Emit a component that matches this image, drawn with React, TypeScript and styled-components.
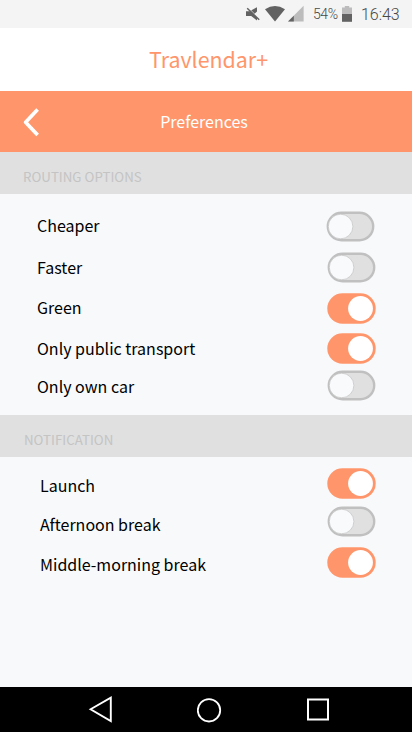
import React from "react";
import styled, { createGlobalStyle } from "styled-components";

const GlobalStyle = createGlobalStyle`
  * { box-sizing: border-box; }
  html, body { margin: 0; padding: 0; background: #f8f9fb; }
  button { border: 0; padding: 0; background: none; font: inherit; display: block; }
  svg { display: block; }
`;

const Screen = styled.div`
  width: 412px;
  height: 732px;
  display: flex;
  flex-direction: column;
  overflow: hidden;
  background: #f8f9fb;
  font-family: "Noto Sans CJK SC", "Noto Sans", sans-serif;
`;

const StatusBar = styled.div`
  height: 28px;
  flex: none;
  display: flex;
  align-items: flex-start;
  padding-left: 245px;
  background: #f4f4f4;
  color: #484848;
  font-family: Roboto, sans-serif;
  font-weight: 300;
  line-height: 29px;
  white-space: nowrap;
`;

const StatusIcons = styled.svg`
  width: 60px;
  height: 28px;
  flex: none;
`;

const Battery = styled.svg`
  width: 12px;
  height: 28px;
  flex: none;
`;

const Percent = styled.span`
  width: 36px;
  padding-left: 8px;
  font-size: 14px;
  letter-spacing: -0.45px;
`;

const Clock = styled.span`
  padding-left: 8px;
  font-size: 16px;
  letter-spacing: -0.05px;
`;

const Brand = styled.header`
  height: 63px;
  flex: none;
  padding-top: 14px;
  padding-left: 5px;
  text-align: center;
  background: #fff;
  color: #ff966b;
  font-size: 21.4px;
  line-height: 34px;
`;

const TitleBar = styled.div`
  height: 61px;
  flex: none;
  display: grid;
  grid-template-columns: 60px 1fr 60px;
  align-items: center;
  background: #ff966b;
  color: #fff;
`;

const BackButton = styled.button`
  width: 40px;
  padding-left: 22px;
`;

const Title = styled.h1`
  margin: 0 4px 2px 0;
  text-align: center;
  font-size: 16px;
  font-weight: 400;
  line-height: 24px;
`;

const SectionHeader = styled.h2<{ $inset: number }>`
  height: 42px;
  flex: none;
  margin: 0;
  padding: 15px 0 0 ${(p) => p.$inset}px;
  background: #e0e0e0;
  color: #c4c4c4;
  font-size: 13.3px;
  font-weight: 400;
  line-height: 20px;
`;

const OptionList = styled.ul<{ $height: number; $inset: number; $top: number }>`
  height: ${(p) => p.$height}px;
  flex: none;
  margin: 0;
  padding: ${(p) => p.$top}px 36px 0 ${(p) => p.$inset}px;
  list-style: none;
`;

const OptionRow = styled.li<{ $height: number }>`
  height: ${(p) => p.$height}px;
  display: flex;
  justify-content: space-between;
  align-items: flex-start;
`;

const Label = styled.span<{ $drop: number }>`
  padding-top: ${(p) => p.$drop}px;
  color: #000;
  font-size: 16px;
  line-height: 24px;
  white-space: nowrap;
`;

const Toggle = styled.button<{ $nudge?: number }>`
  width: 49px;
  height: 31px;
  margin-right: ${(p) => p.$nudge ?? 0}px;
`;

const NavBar = styled.nav`
  height: 45px;
  flex: none;
  display: flex;
  align-items: center;
  justify-content: space-between;
  padding: 0 82px 0 88px;
  background: #000;
`;

type Option = { label: string; on: boolean; height: number; drop: number; nudge?: number };

const routing: Option[] = [
  { label: "Cheaper", on: false, height: 41, drop: 2, nudge: 1 },
  { label: "Faster", on: false, height: 41, drop: 3 },
  { label: "Green", on: true, height: 40, drop: 2 },
  { label: "Only public transport", on: true, height: 37, drop: 3 },
  { label: "Only own car", on: false, height: 31, drop: 4 },
];

const notification: Option[] = [
  { label: "Launch", on: true, height: 38, drop: 5 },
  { label: "Afternoon break", on: false, height: 41, drop: 6 },
  { label: "Middle-morning break", on: true, height: 31, drop: 5 },
];

function Switch({ on, nudge }: { on: boolean; nudge?: number }) {
  return (
    <Toggle role="switch" aria-checked={on} $nudge={nudge}>
      <svg width="49" height="31" viewBox="0 0 49 31">
        {on ? (
          <>
            <rect x="0.3" y="0.2" width="48.4" height="30.6" rx="15.3" fill="#ff966b" />
            <circle cx="33.5" cy="15.5" r="12.4" fill="#fff" />
          </>
        ) : (
          <>
            <rect x="1.8" y="1.8" width="45.4" height="27.4" rx="13.7" fill="#e0e0e0" stroke="#c0c0c0" strokeWidth="2.4" />
            <circle cx="14.6" cy="15.5" r="12.3" fill="#f9fafc" stroke="#c0c0c0" strokeWidth="0.7" />
          </>
        )}
      </svg>
    </Toggle>
  );
}

function Options({ items }: { items: Option[] }) {
  return (
    <>
      {items.map((o) => (
        <OptionRow key={o.label} $height={o.height}>
          <Label $drop={o.drop}>{o.label}</Label>
          <Switch on={o.on} nudge={o.nudge} />
        </OptionRow>
      ))}
    </>
  );
}

export default function App() {
  return (
    <Screen>
      <GlobalStyle />
      <StatusBar>
        <StatusIcons viewBox="0 0 60 28">
          <path d="M1 11.2h3.6L12 7.2v4.3l-3.4 3.2L12 17.6v3L6.2 16H1z" fill="#626262" />
          <path d="M3.6 8.2 14 18.6" stroke="#f4f4f4" strokeWidth="1" />
          <path d="M2.2 8.2 14.2 19.8" stroke="#626262" strokeWidth="1.5" />
          <path d="M20 9.2Q30 2.6 40 9.2L30 21.6z" fill="#626262" />
          <path d="M58.6 5.8V21.6H43z" fill="#bcbcbc" />
          <path d="M48.8 15.8V21.6H43z" fill="#626262" />
        </StatusIcons>
        <Percent>54%</Percent>
        <Battery viewBox="0 0 12 28">
          <path d="M1 7.5h2.8V6h4.4v1.5H11V14H1z" fill="#bcbcbc" />
          <path d="M1 14h10v7.8H1z" fill="#626262" />
        </Battery>
        <Clock>16:43</Clock>
      </StatusBar>
      <Brand>Travlendar+</Brand>
      <TitleBar>
        <BackButton aria-label="Back">
          <svg width="18" height="32" viewBox="0 0 18 32">
            <path d="M15.6 3.4 3.6 16.2 15.6 29" fill="none" stroke="#fff" strokeWidth="3.7" strokeLinejoin="round" />
          </svg>
        </BackButton>
        <Title>Preferences</Title>
      </TitleBar>
      <SectionHeader $inset={23}>ROUTING OPTIONS</SectionHeader>
      <OptionList $height={221} $inset={37} $top={17}>
        <Options items={routing} />
      </OptionList>
      <SectionHeader $inset={24}>NOTIFICATION</SectionHeader>
      <OptionList $height={230} $inset={40} $top={11}>
        <Options items={notification} />
      </OptionList>
      <NavBar>
        <svg width="26" height="30" viewBox="0 0 26 30">
          <path d="M2.6 14.3 22.8 2.6V26z" fill="none" stroke="#fff" strokeWidth="1.9" />
        </svg>
        <svg width="26" height="30" viewBox="0 0 26 30">
          <circle cx="12" cy="15.3" r="11.2" fill="none" stroke="#fff" strokeWidth="1.8" />
        </svg>
        <svg width="24" height="30" viewBox="0 0 24 30">
          <rect x="2" y="4.5" width="20" height="20" fill="none" stroke="#fff" strokeWidth="2" />
        </svg>
      </NavBar>
    </Screen>
  );
}
